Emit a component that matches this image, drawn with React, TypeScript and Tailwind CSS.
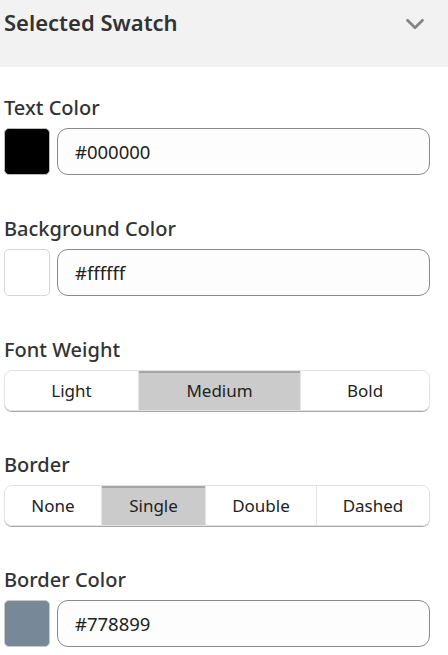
import { ChevronDown } from 'lucide-react'

type Option = { label: string; width: string }

function ColorField({ label, value, swatch, swatchBorder }: { label: string; value: string; swatch: string; swatchBorder: string }) {
  return (
    <div className="pl-[4px] pr-[18px]">
      <div className="pt-[2px] text-[20px] font-medium text-[#333333] leading-[28px]">{label}</div>
      <div className="mt-[6px] flex gap-[7px]">
        <div className={`h-[47px] w-[46px] shrink-0 rounded-[5px] border ${swatchBorder} ${swatch}`} />
        <div className="flex h-[47px] flex-1 items-center rounded-[11px] border border-[#8a8a8a] bg-[#fdfdfd] pl-[17px] text-[18.5px] text-[#222222]">
          {value}
        </div>
      </div>
    </div>
  )
}

function Segmented({ label, options, active }: { label: string; options: Option[]; active: string }) {
  return (
    <div className="px-[4px]">
      <div className="pt-[2px] text-[20px] font-medium text-[#333333] leading-[28px]">{label}</div>
      <div className="mt-[6px] flex h-[41px] w-[426px] overflow-hidden rounded-[8px] border border-[#e2e2e2] shadow-[0_1px_0_#a8a8a8]">
        {options.map((o, i) => {
          const isActive = o.label === active
          return (
            <div
              key={o.label}
              className={`flex items-center justify-center text-[17px] text-[#222222] ${o.width} ${i > 0 ? 'border-l border-[#e4e4e4]' : ''} ${
                isActive ? 'bg-[#cbcbcb] shadow-[inset_0_2px_0_#a5a5a5]' : 'bg-white'
              }`}
            >
              {o.label}
            </div>
          )
        })}
      </div>
    </div>
  )
}

export default function App() {
  return (
    <div className="h-[655px] w-[448px] bg-white" style={{ fontFamily: '"Noto Sans", "Open Sans", sans-serif' }}>
      <div className="flex h-[67px] items-start justify-between bg-[#f2f2f2] pl-[4px] pr-[18px] pt-[6px]">
        <div className="text-[22px] font-semibold text-[#333333] leading-[32px]">Selected Swatch</div>
        <ChevronDown className="mt-[3px] h-[30px] w-[30px] text-[#858585]" strokeWidth={2.2} />
      </div>

      <div className="mt-[25px]">
        <ColorField label="Text Color" value="#000000" swatch="bg-black" swatchBorder="border-[#bbbbbb]" />
      </div>
      <div className="mt-[38px]">
        <ColorField label="Background Color" value="#ffffff" swatch="bg-white" swatchBorder="border-[#d6d6d6]" />
      </div>
      <div className="mt-[38px]">
        <Segmented
          label="Font Weight"
          active="Medium"
          options={[
            { label: 'Light', width: 'w-[133px]' },
            { label: 'Medium', width: 'w-[162px]' },
            { label: 'Bold', width: 'flex-1' },
          ]}
        />
      </div>
      <div className="mt-[38px]">
        <Segmented
          label="Border"
          active="Single"
          options={[
            { label: 'None', width: 'w-[96px]' },
            { label: 'Single', width: 'w-[104px]' },
            { label: 'Double', width: 'w-[111px]' },
            { label: 'Dashed', width: 'flex-1' },
          ]}
        />
      </div>
      <div className="mt-[38px]">
        <ColorField label="Border Color" value="#778899" swatch="bg-[#778899]" swatchBorder="border-[#c8c8c8]" />
      </div>
    </div>
  )
}
